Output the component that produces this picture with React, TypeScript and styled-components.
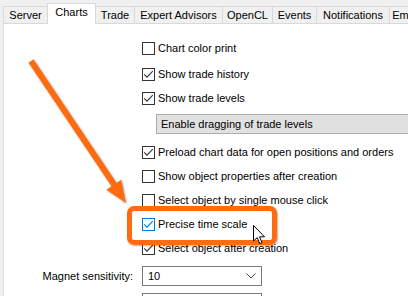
import React from 'react';
import styled, { createGlobalStyle } from 'styled-components';

const Global = createGlobalStyle`
  html, body { margin: 0; padding: 0; width: 408px; height: 296px; overflow: hidden; background: #f0f0f0; }
  body { font-family: "Liberation Sans", Arial, sans-serif; font-size: 11px; color: #000; }
  #root { width: 408px; height: 296px; }
`;

const ORANGE = '#ff6b0f';

const Window = styled.div`
  position: relative;
  width: 408px;
  height: 296px;
  overflow: hidden;
  display: flex;
  flex-direction: column;
`;

const TabBar = styled.div`
  display: flex;
  align-items: flex-end;
  height: 23px;
  padding-left: 3px;
  flex-shrink: 0;
`;

const Tab = styled.div<{ $w: number; $active?: boolean }>`
  position: relative;
  z-index: ${p => (p.$active ? 2 : 1)};
  box-sizing: border-box;
  width: ${p => p.$w}px;
  flex-shrink: 0;
  height: ${p => (p.$active ? 21 : 17)}px;
  margin-right: -1px;
  margin-bottom: ${p => (p.$active ? -1 : 0)}px;
  border: 1px solid #d9d9d9;
  border-bottom: none;
  background: ${p => (p.$active ? '#ffffff' : '#f0f0f0')};
  display: flex;
  align-items: center;
  justify-content: center;
  padding-bottom: ${p => (p.$active ? 4 : 0)}px;
  white-space: nowrap;
  overflow: hidden;
`;

const Panel = styled.div`
  flex: 1;
  margin-left: 3px;
  background: #ffffff;
  border-top: 1px solid #d9d9d9;
  border-left: 1px solid #d9d9d9;
`;

const Form = styled.div`
  display: grid;
  grid-template-columns: 138px 1fr;
  padding-top: 12px;
`;

const CheckRow = styled.div<{ $mt?: number }>`
  grid-column: 2;
  height: 24px;
  margin-top: ${p => p.$mt ?? 0}px;
  display: flex;
  align-items: center;
  gap: 3px;
  white-space: nowrap;
`;

const Box = styled.span<{ $hover?: boolean }>`
  box-sizing: border-box;
  width: 13px;
  height: 13px;
  flex-shrink: 0;
  border: 1px solid ${p => (p.$hover ? '#0078d7' : '#333333')};
  background: #fff;
  display: flex;
  align-items: center;
  justify-content: center;
`;

const DisabledField = styled.div`
  grid-column: 2;
  margin-top: 4px;
  margin-left: 14px;
  box-sizing: border-box;
  width: 270px;
  height: 20px;
  background: #e1e1e1;
  border: 1px solid #adadad;
  padding-left: 4px;
  display: flex;
  align-items: center;
  white-space: nowrap;
`;

const FieldLabel = styled.div<{ $mt?: number }>`
  grid-column: 1;
  margin-top: ${p => p.$mt ?? 0}px;
  padding-right: 9px;
  display: flex;
  align-items: center;
  justify-content: flex-end;
  white-space: nowrap;
`;

const Combo = styled.div<{ $mt?: number }>`
  grid-column: 2;
  margin-top: ${p => p.$mt ?? 0}px;
  box-sizing: border-box;
  width: 120px;
  height: 20px;
  border: 1px solid #7a7a7a;
  background: #fff;
  display: flex;
  align-items: center;
  justify-content: space-between;
  padding: 0 5px 0 5px;
`;

const Highlight = styled.div`
  position: absolute;
  left: 127px;
  top: 206px;
  width: 150px;
  height: 39px;
  box-sizing: border-box;
  border: 5px solid ${ORANGE};
  border-radius: 7px;
  box-shadow: 1px 1px 2px rgba(0, 0, 0, 0.3);
  pointer-events: none;
`;

const Overlay = styled.svg`
  position: absolute;
  left: 0;
  top: 0;
  width: 408px;
  height: 296px;
  pointer-events: none;
  overflow: visible;
`;

const Cursor = styled.svg`
  position: absolute;
  left: 253px;
  top: 225px;
  width: 13px;
  height: 20px;
  pointer-events: none;
`;

const Check: React.FC<{ checked?: boolean; hover?: boolean }> = ({ checked, hover }) => (
  <Box $hover={hover}>
    {checked && (
      <svg width="11" height="11" viewBox="0 0 11 11">
        <path d="M1.2 5.3 L4 8.2 L9.8 2.2" fill="none" stroke={hover ? '#0078d7' : '#333'} strokeWidth="1.1" />
      </svg>
    )}
  </Box>
);

const Chevron = () => (
  <svg width="10" height="6" viewBox="0 0 10 6">
    <path d="M0.5 0.5 L5 5 L9.5 0.5" fill="none" stroke="#444" strokeWidth="1" />
  </svg>
);

const tabs: { label: string; w: number; active?: boolean }[] = [
  { label: 'Server', w: 45 },
  { label: 'Charts', w: 49, active: true },
  { label: 'Trade', w: 40 },
  { label: 'Expert Advisors', w: 89 },
  { label: 'OpenCL', w: 51 },
  { label: 'Events', w: 45 },
  { label: 'Notifications', w: 74 },
  { label: 'Email', w: 34 },
];

export default function App() {
  return (
    <Window>
      <Global />
      <TabBar>
        {tabs.map(t => (
          <Tab key={t.label} $w={t.w} $active={t.active}>
            {t.label}
          </Tab>
        ))}
      </TabBar>
      <Panel>
        <Form>
          <CheckRow>
            <Check />
            Chart color print
          </CheckRow>
          <CheckRow $mt={2}>
            <Check checked />
            Show trade history
          </CheckRow>
          <CheckRow>
            <Check checked />
            Show trade levels
          </CheckRow>
          <DisabledField>Enable dragging of trade levels</DisabledField>
          <CheckRow $mt={6}>
            <Check checked />
            Preload chart data for open positions and orders
          </CheckRow>
          <CheckRow>
            <Check />
            Show object properties after creation
          </CheckRow>
          <CheckRow>
            <Check />
            Select object by single mouse click
          </CheckRow>
          <CheckRow>
            <Check checked hover />
            Precise time scale
          </CheckRow>
          <CheckRow>
            <Check checked />
            Select object after creation
          </CheckRow>
          <FieldLabel $mt={6}>Magnet sensitivity:</FieldLabel>
          <Combo $mt={6}>
            <span>10</span>
            <Chevron />
          </Combo>
          <Combo $mt={7} />
        </Form>
      </Panel>
      <Highlight />
      <Overlay viewBox="0 0 408 296" style={{ filter: 'drop-shadow(1px 1px 1px rgba(0,0,0,0.3))' }}>
        <line x1="31" y1="61" x2="115" y2="186" stroke={ORANGE} strokeWidth="6" />
        <polygon points="126,203 106.3,189.7 121.3,179.7" fill={ORANGE} />
      </Overlay>
      <Cursor viewBox="0 0 13 20">
        <path
          d="M0.5 0.5 L0.5 16 L4.2 12.6 L6.8 18.6 L9 17.6 L6.5 11.8 L11.5 11.8 Z"
          fill="#fff"
          stroke="#000"
          strokeWidth="1"
          strokeLinejoin="miter"
        />
      </Cursor>
    </Window>
  );
}
